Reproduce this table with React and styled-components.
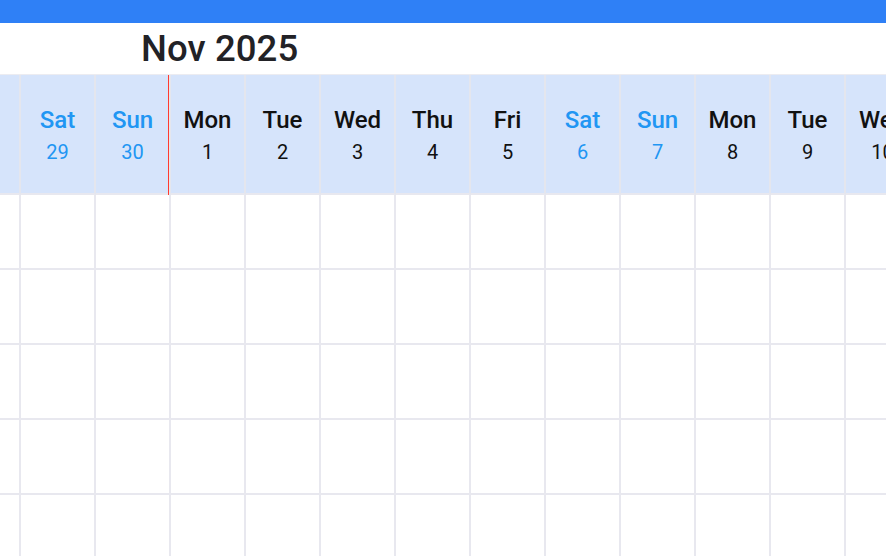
import React from 'react';
import styled, { createGlobalStyle } from 'styled-components';

const days = [
    { name: 'Fri', date: 28 },
    { name: 'Sat', date: 29, weekend: true },
    { name: 'Sun', date: 30, weekend: true },
    { name: 'Mon', date: 1, now: true },
    { name: 'Tue', date: 2 },
    { name: 'Wed', date: 3 },
    { name: 'Thu', date: 4 },
    { name: 'Fri', date: 5 },
    { name: 'Sat', date: 6, weekend: true },
    { name: 'Sun', date: 7, weekend: true },
    { name: 'Mon', date: 8 },
    { name: 'Tue', date: 9 },
    { name: 'Wed', date: 10 },
];

const rows = [0, 1, 2, 3, 4];

const App = () => {
    return (
        <Page>
            <Global />
            <TopBar />
            <TitleBar>
                <Title>Nov 2025</Title>
            </TitleBar>
            <Viewport>
                <Grid cols={days.length}>
                    {days.map((d, i) => (
                        <HeadCell key={'h' + i}>
                            {d.now && <NowLine />}
                            <DayName weekend={d.weekend}>{d.name}</DayName>
                            <DayNum weekend={d.weekend}>{d.date}</DayNum>
                        </HeadCell>
                    ))}
                    {rows.map((r) =>
                        days.map((d, i) => <Cell key={r + '-' + i} />)
                    )}
                </Grid>
            </Viewport>
        </Page>
    );
};

export default App;

const Global = createGlobalStyle`
    html, body {
        margin: 0;
        padding: 0;
        background: #fff;
        overflow: hidden;
    }
    body {
        font-family: Roboto, "Noto Sans", "Liberation Sans", sans-serif;
    }
`

const Page = styled.div`
    width: 886px;
    height: 556px;
    overflow: hidden;
    display: flex;
    flex-direction: column;
`

const TopBar = styled.div`
    height: 23px;
    flex-shrink: 0;
    background: #2f80f6;
`

const TitleBar = styled.div`
    height: 52px;
    flex-shrink: 0;
    display: flex;
    align-items: center;
    padding-left: 141px;
    box-sizing: border-box;
    border-bottom: 1px solid #ececf1;
`

const Title = styled.h1`
    margin: 0;
    font-size: 36.5px;
    font-weight: 500;
    color: #222226;
    letter-spacing: 0.1px;
`

const Viewport = styled.div`
    flex: 1;
    overflow: hidden;
`

// scrolled so the first day is partly hidden
const Grid = styled.div`
    display: grid;
    grid-template-columns: repeat(${(props) => props.cols}, 75px);
    grid-auto-rows: 75px;
    grid-template-rows: 120px;
    margin-left: -54px;
    width: max-content;
`

const HeadCell = styled.div`
    position: relative;
    display: flex;
    flex-direction: column;
    align-items: center;
    justify-content: center;
    gap: 6px;
    padding-top: 2px;
    background: #d6e4fb;
    border-right: 2px solid #e4e6ee;
    border-bottom: 2px solid #e8e8ef;
`

const NowLine = styled.div`
    position: absolute;
    left: -3px;
    top: 0;
    bottom: -2px;
    width: 1px;
    background: #ff3b30;
`

const DayName = styled.div`
    font-size: 24px;
    font-weight: 500;
    line-height: 28px;
    color: ${(props) => (props.weekend ? '#2196f3' : '#111')};
`

const DayNum = styled.div`
    font-size: 20px;
    font-weight: 400;
    line-height: 24px;
    color: ${(props) => (props.weekend ? '#2196f3' : '#111')};
`

const Cell = styled.div`
    background: #fff;
    border-right: 2px solid #e8e8ef;
    border-bottom: 2px solid #e8e8ef;
`
